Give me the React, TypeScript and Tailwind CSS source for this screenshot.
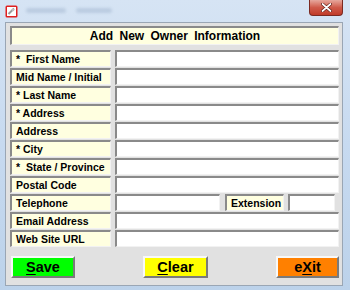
import React from "react";

const font = { fontFamily: '"Liberation Sans", Arial, sans-serif' };

const rows = [
  "*  First Name",
  "Mid Name / Initial",
  "* Last Name",
  "* Address",
  "Address",
  "* City",
  "*  State / Province",
  "Postal Code",
  "Telephone",
  "Email Address",
  "Web Site URL",
];

function Label({ text, className = "" }: { text: string; className?: string }) {
  return (
    <div
      className={`h-[17px] flex items-center pl-[4px] bg-[#ffffe0] border-t-2 border-l-2 border-t-[#8a8a8a] border-l-[#8a8a8a] border-b border-r border-b-[#f2f2f2] border-r-[#f2f2f2] text-[10.5px] font-bold text-black whitespace-pre leading-none ${className}`}
    >
      {text}
    </div>
  );
}

function Field({ className = "" }: { className?: string }) {
  return (
    <div
      className={`h-[17px] bg-white border-t-2 border-l-2 border-t-[#8a8a8a] border-l-[#8a8a8a] border-b border-r border-b-[#f2f2f2] border-r-[#f2f2f2] ${className}`}
    />
  );
}

function Btn({ pre, key1, post, color, w }: { pre: string; key1: string; post: string; color: string; w: string }) {
  return (
    <button
      className={`h-[22px] ${w} ${color} border-2 border-t-[#f8f8f8] border-l-[#f8f8f8] border-b-[#7a7a7a] border-r-[#7a7a7a] text-[14.5px] font-bold text-black leading-none flex items-center justify-center`}
    >
      {pre}
      <span className="underline underline-offset-2">{key1}</span>
      {post}
    </button>
  );
}

export default function App() {
  return (
    <div
      style={font}
      className="w-[350px] h-[290px] flex flex-col bg-gradient-to-b from-[#d6e4f4] via-[#c7daf0] to-[#bcd2ea] overflow-hidden"
    >
      {/* Title bar */}
      <div className="h-[22px] flex items-start shrink-0">
        <svg width="13" height="13" viewBox="0 0 13 13" className="ml-[5px] mt-[5px]">
          <rect x="0.5" y="0.5" width="12" height="12" rx="1.5" fill="#e02020" />
          <rect x="2" y="2" width="9" height="9" fill="#fff" />
          <path d="M3.5 9 L9 3.5" stroke="#9a9a9a" strokeWidth="2" />
          <circle cx="8" cy="5" r="1.3" fill="#bdbdbd" />
        </svg>
        <div className="ml-[8px] mt-[8px] flex gap-[10px] blur-[1.5px] opacity-60">
          <div className="w-[40px] h-[5px] bg-[#a9bcd4] rounded" />
          <div className="w-[36px] h-[5px] bg-[#a9bcd4] rounded" />
        </div>
        <div className="ml-auto mr-[7px] w-[34px] h-[16px] rounded-b-[4px] border border-t-0 border-[#7b2a22] bg-gradient-to-b from-[#e6a79d] via-[#cf5a4a] to-[#c03a28] flex items-center justify-center">
          <svg width="11" height="9" viewBox="0 0 11 9">
            <path d="M1.5 1 L9.5 8 M9.5 1 L1.5 8" stroke="#5a1a12" strokeWidth="3" strokeLinecap="round" />
            <path d="M1.5 1 L9.5 8 M9.5 1 L1.5 8" stroke="#fff" strokeWidth="1.7" strokeLinecap="round" />
          </svg>
        </div>
      </div>

      {/* Client area */}
      <div className="ml-[5px] mr-[7px] mb-[4px] flex-1 bg-[#e1e1e1] border border-[#9aa6b4] pl-[4px] pt-[3px] flex flex-col">
        <div className="w-[329px] h-[19px] bg-[#ffffe0] border-t-2 border-l-2 border-t-[#8a8a8a] border-l-[#8a8a8a] border-b border-r border-b-[#f2f2f2] border-r-[#f2f2f2] flex items-center justify-center text-[12px] font-bold text-black leading-none [word-spacing:3px]">
          Add New Owner Information
        </div>

        <div className="mt-[5px] w-[329px] flex flex-col gap-[1px]">
          {rows.map((r) =>
            r === "Telephone" ? (
              <div key={r} className="flex">
                <Label text={r} className="w-[101px]" />
                <Field className="ml-[4px] w-[105px]" />
                <Label text="Extension" className="ml-[5px] w-[59px]" />
                <Field className="ml-[4px] w-[47px]" />
              </div>
            ) : (
              <div key={r} className="flex">
                <Label text={r} className="w-[101px]" />
                <Field className="ml-[4px] flex-1" />
              </div>
            )
          )}
        </div>

        <div className="mt-[9px] w-[329px] pl-[1px] flex justify-between">
          <Btn pre="" key1="S" post="ave" color="bg-[#00ff00]" w="w-[64px]" />
          <Btn pre="" key1="C" post="lear" color="bg-[#ffff00]" w="w-[65px]" />
          <Btn pre="e" key1="X" post="it" color="bg-[#ff8000]" w="w-[63px]" />
        </div>
      </div>
    </div>
  );
}
